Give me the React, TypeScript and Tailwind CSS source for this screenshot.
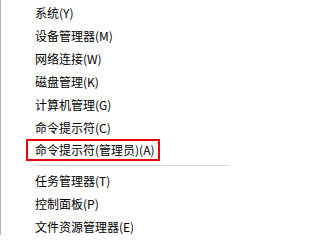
const topItems = [
  '系统(Y)',
  '设备管理器(M)',
  '网络连接(W)',
  '磁盘管理(K)',
  '计算机管理(G)',
  '命令提示符(C)',
];

const bottomItems = ['任务管理器(T)', '控制面板(P)', '文件资源管理器(E)'];

function MenuRow({ label }: { label: string }) {
  return (
    <div className="flex h-[23px] items-center pl-[34px] whitespace-nowrap">{label}</div>
  );
}

export default function App() {
  return (
    <div
      className="h-[235px] w-[232px] overflow-hidden border-l border-[#b4b4b4] bg-white pt-[1px] text-[12px] leading-none text-black"
      style={{ fontFamily: '"Noto Sans CJK SC", "Noto Sans", sans-serif' }}
    >
      {topItems.map((label) => (
        <MenuRow key={label} label={label} />
      ))}
      {/* highlighted admin entry */}
      <div className="flex h-[23px] items-start pl-[25px]">
        <span className="flex h-[22px] items-center whitespace-nowrap border-2 border-[#e8000b] pl-[7px] pr-[3px]">
          命令提示符(管理员)(A)
        </span>
      </div>
      <div className="ml-[34px] mr-[2px] my-[3px] border-t border-[#d9d9d9]" />
      {bottomItems.map((label) => (
        <MenuRow key={label} label={label} />
      ))}
    </div>
  );
}
